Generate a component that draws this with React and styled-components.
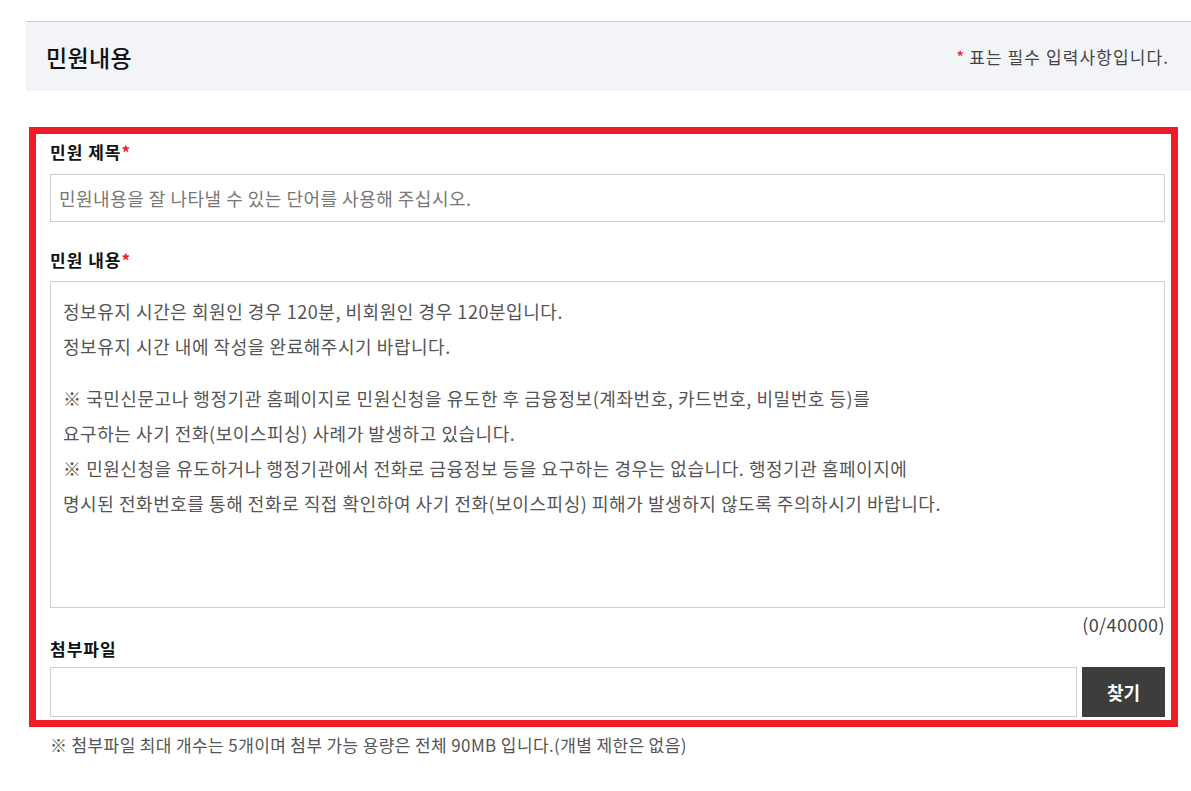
import React from 'react';
import styled, { createGlobalStyle } from 'styled-components';

const GlobalStyle = createGlobalStyle`
    html, body {
        margin: 0;
        padding: 0;
        background: #fff;
    }
    body {
        font-family: "Noto Sans CJK KR", "Noto Sans", sans-serif;
        color: #111;
    }
`
const Page = styled.div`
    width: 1191px;
    padding: 21px 0 0 26px;
    box-sizing: border-box;
    overflow: hidden;
`
const Header = styled.div`
    display: flex;
    align-items: center;
    justify-content: space-between;
    height: 69px;
    border-top: 1px solid #cdcdd2;
    background: #f3f4f8;
    padding: 0 22px 0 20px;
`
const Title = styled.h2`
    margin: 0;
    font-size: 23px;
    font-weight: 500;
    letter-spacing: 0.3px;
    color: #111;
`
const Notice = styled.p`
    margin: 0;
    font-size: 17px;
    letter-spacing: 1.1px;
    color: #444;
`
const Star = styled.span`
    color: #e8202a;
    margin-right: 4px;
`
const Highlight = styled.section`
    margin: 36px 13px 0 3px;
    border: 7px solid #ee1c25;
    padding: 6px 6px 3px 14px;
`
const Label = styled.label`
    display: block;
    font-size: 17px;
    font-weight: 700;
    line-height: 24px;
    letter-spacing: 1px;
    color: #111;
    margin-top: ${({ $top }) => $top || 0}px;
    margin-bottom: ${({ $bottom }) => $bottom || 0}px;
`
const Req = styled.span`
    color: #e8202a;
`
const TextInput = styled.input`
    display: block;
    width: 100%;
    height: 48px;
    box-sizing: border-box;
    border: 1px solid #cfcfcf;
    padding: 0 8px;
    font-family: inherit;
    font-size: 18px;
    letter-spacing: 0.5px;
    color: #333;
    outline: none;
    &::placeholder {
        color: #777;
    }
`
const TextBox = styled.div`
    height: 327px;
    box-sizing: border-box;
    border: 1px solid #cfcfcf;
    padding: 12px 12px;
    font-size: 18px;
    line-height: 35px;
    letter-spacing: 0.55px;
    color: #555;
`
const Para = styled.p`
    margin: 0 0 17px;
`
const Counter = styled.div`
    text-align: right;
    font-size: 18px;
    line-height: 24px;
    letter-spacing: 0.4px;
    color: #444;
    margin-top: 4px;
`
const FileRow = styled.div`
    display: flex;
    gap: 5px;
    height: 50px;
`
const FileField = styled.div`
    flex: 1;
    border: 1px solid #cfcfcf;
`
const FindButton = styled.button`
    width: 83px;
    border: 0;
    background: #3d3d3d;
    color: #fff;
    font-family: inherit;
    font-size: 18px;
    font-weight: 700;
    cursor: pointer;
`
const Note = styled.p`
    margin: 6px 0 0 24px;
    font-size: 17px;
    line-height: 24px;
    letter-spacing: 0.38px;
    color: #555;
`

const App = () => {
    return (
        <Page>
            <GlobalStyle />
            <Header>
                <Title>민원내용</Title>
                <Notice><Star>*</Star>표는 필수 입력사항입니다.</Notice>
            </Header>
            <Highlight>
                <Label $bottom={10}>민원 제목<Req>*</Req></Label>
                <TextInput placeholder="민원내용을 잘 나타낼 수 있는 단어를 사용해 주십시오." />
                <Label $top={26} $bottom={9}>민원 내용<Req>*</Req></Label>
                <TextBox>
                    <Para>
                        정보유지 시간은 회원인 경우 120분, 비회원인 경우 120분입니다.<br />
                        정보유지 시간 내에 작성을 완료해주시기 바랍니다.
                    </Para>
                    <Para>
                        ※ 국민신문고나 행정기관 홈페이지로 민원신청을 유도한 후 금융정보(계좌번호, 카드번호, 비밀번호 등)를<br />
                        요구하는 사기 전화(보이스피싱) 사례가 발생하고 있습니다.<br />
                        ※ 민원신청을 유도하거나 행정기관에서 전화로 금융정보 등을 요구하는 경우는 없습니다. 행정기관 홈페이지에<br />
                        명시된 전화번호를 통해 전화로 직접 확인하여 사기 전화(보이스피싱) 피해가 발생하지 않도록 주의하시기 바랍니다.
                    </Para>
                </TextBox>
                <Counter>(0/40000)</Counter>
                <Label $top={1} $bottom={6}>첨부파일</Label>
                <FileRow>
                    <FileField />
                    <FindButton>찾기</FindButton>
                </FileRow>
            </Highlight>
            <Note>※ 첨부파일 최대 개수는 5개이며 첨부 가능 용량은 전체 90MB 입니다.(개별 제한은 없음)</Note>
        </Page>
    )
}

export default App
